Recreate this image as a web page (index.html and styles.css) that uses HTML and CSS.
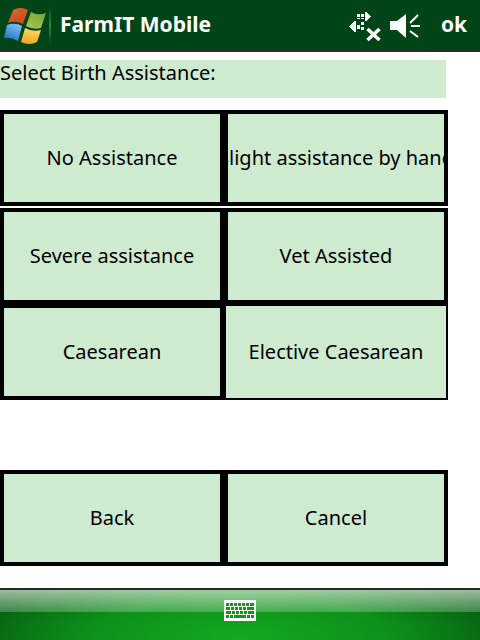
FILE: index.html
```html
<!DOCTYPE html>
<html>
<head>
  <title>FarmIT Mobile</title>
  <link rel="stylesheet" href="styles.css">
</head>
<body>
  <div class="screen">
    <header class="titlebar">
      <svg class="flag" width="50" height="50" viewBox="0 0 50 50">
        <defs>
          <linearGradient id="red" x1="0" y1="0" x2="0.6" y2="1"><stop offset="0" stop-color="#c9742f"/><stop offset="1" stop-color="#d8401c"/></linearGradient>
          <linearGradient id="grn" x1="0.8" y1="0" x2="0.2" y2="1"><stop offset="0" stop-color="#7ba33a"/><stop offset="1" stop-color="#a5c84c"/></linearGradient>
          <linearGradient id="blu" x1="0.7" y1="0" x2="0.2" y2="1"><stop offset="0" stop-color="#7cc0ee"/><stop offset="1" stop-color="#1c6fc4"/></linearGradient>
          <linearGradient id="yel" x1="0.6" y1="0" x2="0.4" y2="1"><stop offset="0" stop-color="#f6dc6a"/><stop offset="1" stop-color="#f3a51f"/></linearGradient>
        </defs>
        <path d="M13 10 Q20 6 28 10 L23 24 Q15 20 8 23 Z" fill="url(#red)"/>
        <path d="M31 12 Q38 16 46 13 L41 28 Q33 30 26 26 Z" fill="url(#grn)"/>
        <path d="M7 25 Q15 22 22 26 L18 41 Q11 37 4 38 Z" fill="url(#blu)"/>
        <path d="M25 28 Q32 32 41 30 L37 42 Q29 46 21 42 Z" fill="url(#yel)"/>
      </svg>
      <span class="divider"></span>
      <span class="app-name">FarmIT Mobile</span>
      <svg class="net-icon" width="34" height="34" viewBox="0 0 34 34" shape-rendering="crispEdges">
        <g fill="#fff">
          <rect x="8" y="6" width="3" height="3"/><rect x="12" y="6" width="3" height="3"/>
          <rect x="8" y="10" width="3" height="1"/><rect x="12" y="10" width="3" height="1"/>
          <path d="M16 4 L17 4 L22 8.500 L17 13 L16 13 L16 4 Z"/>
          <path d="M7 13 L6 13 L0 18.500 L6 24 L7 24 L7 13 Z"/>
          <rect x="8" y="17" width="3" height="4"/>
          <rect x="12" y="14" width="3" height="3"/><rect x="12" y="19" width="3" height="3"/>
        </g>
        <path d="M18.500 21 L30.500 32 M30.500 21 L18.500 32" stroke="#fff" stroke-width="3.600" fill="none" shape-rendering="auto"/>
      </svg>
      <svg class="vol-icon" width="32" height="28" viewBox="0 0 32 28">
        <path d="M0 10 L7 10 L16 3 L16 27 L7 19 L0 19 Z" fill="#fff"/>
        <path d="M20 12 L28 4 M21 15 L30 15 M20 20 L28 26" stroke="#fff" stroke-width="2" fill="none"/>
      </svg>
      <span class="ok">ok</span>
    </header>
    <main class="content">
      <div class="prompt">Select Birth Assistance:</div>
      <div class="row row-first">
        <button class="btn"><span>No Assistance</span></button>
        <button class="btn"><span>Slight assistance by hand</span></button>
      </div>
      <div class="row">
        <button class="btn"><span>Severe assistance</span></button>
        <button class="btn"><span>Vet Assisted</span></button>
      </div>
      <div class="row">
        <button class="btn"><span>Caesarean</span></button>
        <button class="btn btn-thin"><span>Elective Caesarean</span></button>
      </div>
      <div class="row row-nav">
        <button class="btn"><span>Back</span></button>
        <button class="btn"><span>Cancel</span></button>
      </div>
    </main>
    <footer class="menubar">
      <svg width="32" height="21" viewBox="0 0 32 21" shape-rendering="crispEdges">
        <rect x="0" y="0" width="32" height="21" rx="1" fill="#fff"/>
        <g class="keys">
          <rect x="2" y="3" width="3" height="3"/><rect x="6" y="3" width="3" height="3"/><rect x="10" y="3" width="3" height="3"/><rect x="14" y="3" width="3" height="3"/><rect x="18" y="3" width="3" height="3"/><rect x="22" y="3" width="3" height="3"/><rect x="26" y="3" width="4" height="3"/>
          <rect x="2" y="7" width="4" height="3"/><rect x="7" y="7" width="3" height="3"/><rect x="11" y="7" width="3" height="3"/><rect x="15" y="7" width="3" height="3"/><rect x="19" y="7" width="3" height="3"/><rect x="23" y="7" width="7" height="3"/>
          <rect x="2" y="11" width="5" height="3"/><rect x="8" y="11" width="3" height="3"/><rect x="12" y="11" width="3" height="3"/><rect x="16" y="11" width="3" height="3"/><rect x="20" y="11" width="3" height="3"/><rect x="24" y="11" width="6" height="3"/>
          <rect x="2" y="15" width="3" height="3"/><rect x="6" y="15" width="3" height="3"/><rect x="10" y="15" width="12" height="3"/><rect x="23" y="15" width="3" height="3"/><rect x="27" y="15" width="3" height="3"/>
        </g>
      </svg>
    </footer>
  </div>
</body>
</html>
```

FILE: styles.css
```css
html, body {
  margin: 0;
  padding: 0;
  background: #fff;
}

.screen {
  width: 480px;
  height: 640px;
  display: flex;
  flex-direction: column;
  overflow: hidden;
  font-family: "Noto Sans", "Liberation Sans", sans-serif;
}

.titlebar {
  height: 50px;
  flex: none;
  display: flex;
  align-items: center;
  background: #004417;
  border-bottom: 2px solid #2a2a2a;
  color: #fff;
}

.flag {
  flex: none;
}

.divider {
  width: 2px;
  height: 40px;
  margin-left: -1px;
  background: linear-gradient(#004417, #2f8a45 50%, #004417);
}

.app-name {
  margin-left: 9px;
  padding-bottom: 2px;
  font-size: 21px;
  font-weight: 700;
}

.net-icon {
  margin-left: 138px;
}

.vol-icon {
  margin-left: 7px;
}

.ok {
  margin-left: 19px;
  padding-bottom: 2px;
  font-size: 21px;
  font-weight: 700;
}

.content {
  flex: 1;
  padding-top: 8px;
  display: flex;
  flex-direction: column;
}

.prompt {
  width: 446px;
  height: 38px;
  margin-bottom: 12px;
  background: #cfebcf;
  font-size: 20px;
  line-height: 26px;
  color: #000;
}

.row {
  display: flex;
  width: 448px;
  height: 96px;
  flex: none;
}

.row-first {
  margin-bottom: 2px;
}

.row-nav {
  margin-top: 70px;
}

.btn {
  width: 224px;
  height: 96px;
  padding: 0 0 2px;
  box-sizing: border-box;
  display: flex;
  align-items: center;
  justify-content: center;
  overflow: hidden;
  white-space: nowrap;
  background: #cfebcf;
  border: 4px solid #000;
  border-radius: 0;
  color: #000;
  font-family: inherit;
  font-size: 20px;
}

.btn span {
  flex: none;
}

.btn-thin {
  border-width: 2px;
}

.menubar {
  height: 52px;
  flex: none;
  box-sizing: border-box;
  border-top: 2px solid #2a2a2a;
  display: flex;
  justify-content: center;
  padding-top: 10px;
  background:
    linear-gradient(rgba(255,255,255,0.6), rgba(255,255,255,0.22) 22px, rgba(255,255,255,0) 22px),
    radial-gradient(ellipse 280px 80px at 50% 100%, #14aa20, #0d9019 55%, #065c12);
}

.menubar svg {
  display: block;
}

.keys {
  fill: #12961c;
}
```
